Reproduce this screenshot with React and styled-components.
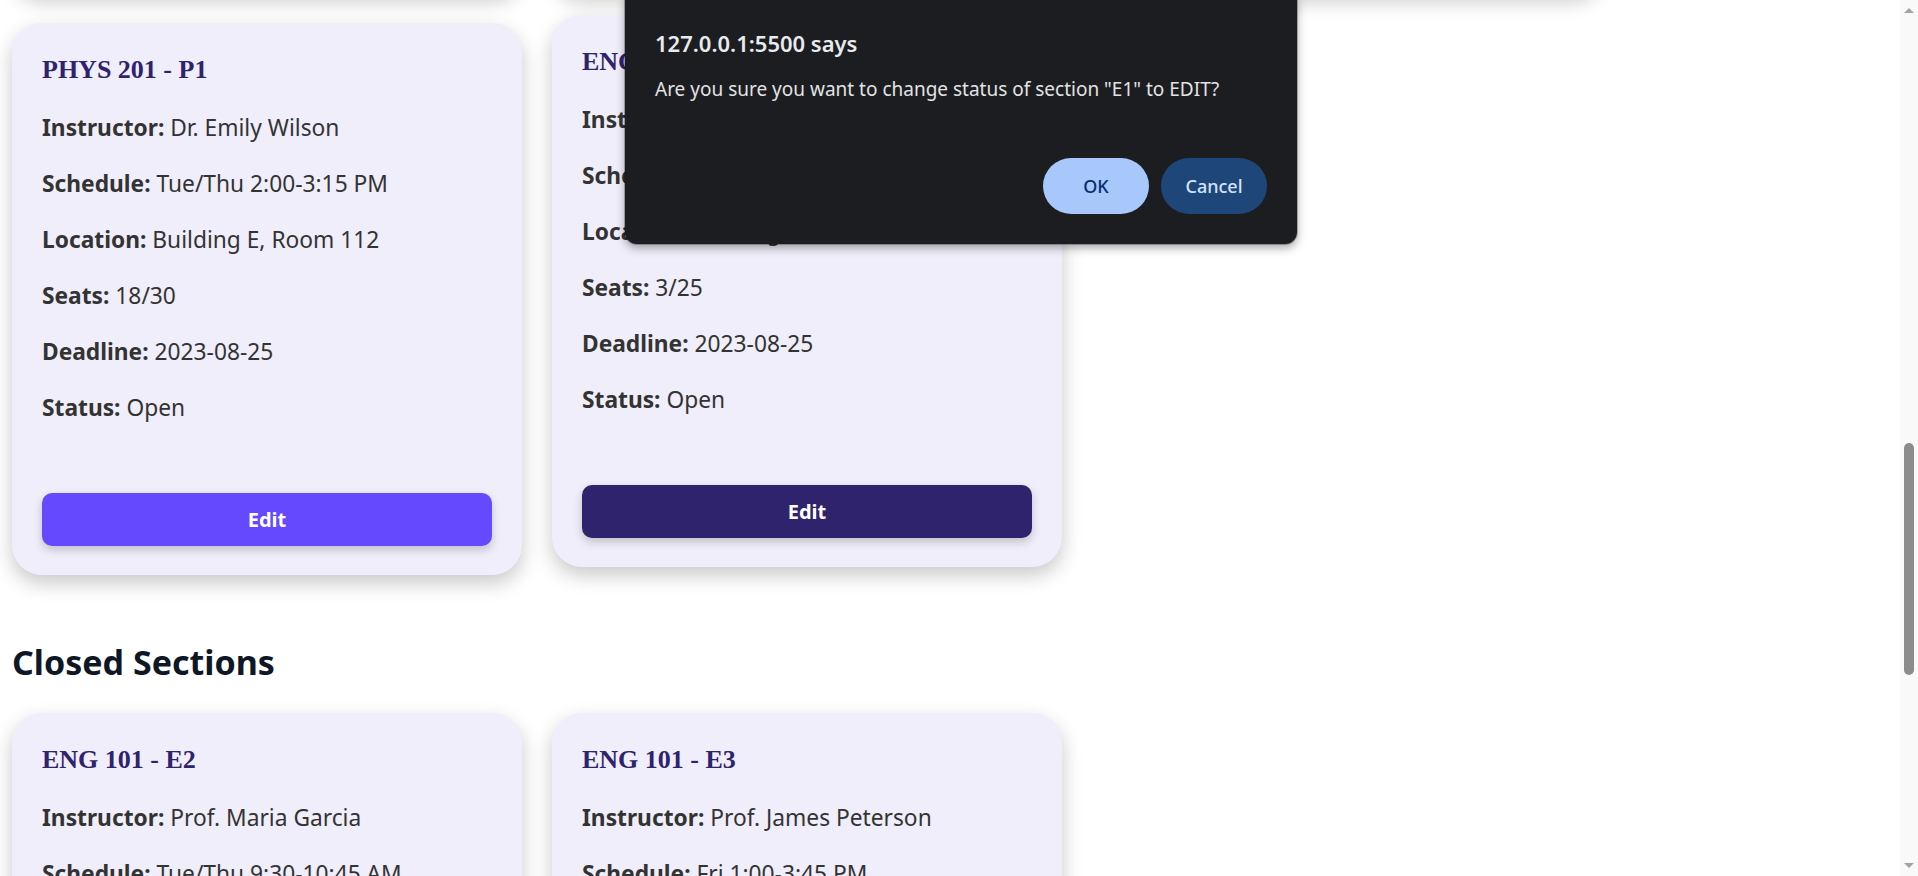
import React, { useLayoutEffect, useRef } from 'react';
import styled, { createGlobalStyle } from 'styled-components';

const GlobalStyle = createGlobalStyle`
  html, body {
    margin: 0;
    padding: 0;
    height: 100%;
    overflow: hidden;
    background: #fff;
  }

  body {
    font-family: "Noto Sans", "Segoe UI", sans-serif;
    color: #333;
  }

  * {
    box-sizing: border-box;
  }
`;

const Window = styled.div`
  position: relative;
  display: flex;
  height: 100vh;
  background: #fff;
`;

const Viewport = styled.div`
  position: relative;
  flex: 1;
  overflow: hidden;
`;

const Page = styled.main`
  padding: 0 12px 60px;
`;

const SectionTitle = styled.h2`
  margin: 66px 0 30px;
  font-size: 34px;
  line-height: 42px;
  font-weight: 700;
  color: #0e1726;

  &:first-child {
    margin-top: 24px;
  }
`;

const Grid = styled.div`
  display: grid;
  grid-template-columns: repeat(auto-fill, 510px);
  gap: 30px;
`;

const Card = styled.article`
  display: flex;
  flex-direction: column;
  padding: 32px 30px 29px;
  background: #f0eefa;
  border-radius: 30px;
  box-shadow: 0 8px 20px rgba(0, 0, 0, 0.22);
  transform: ${(p) => (p.$lifted ? 'translateY(-8px)' : 'none')};
`;

const CourseTitle = styled.h3`
  margin: 0 0 15px;
  font-family: "Liberation Serif", "Times New Roman", serif;
  font-size: 26px;
  line-height: 1.15;
  font-weight: 700;
  color: #2e236c;
`;

const Row = styled.p`
  margin: 0;
  font-size: 22.75px;
  line-height: 56px;
  color: #333;
  white-space: nowrap;

  & > strong {
    font-weight: 700;
  }
`;

const EditButton = styled.button`
  margin-top: 57px;
  width: 100%;
  height: 53px;
  border: 0;
  border-radius: 10px;
  background: ${(p) => (p.$active ? '#6449ff' : '#2e236c')};
  color: #fff;
  font-family: "Noto Sans", sans-serif;
  font-size: 20px;
  font-weight: 700;
  box-shadow: 0 4px 10px rgba(0, 0, 0, 0.2);
  cursor: pointer;
`;

const Scrollbar = styled.div`
  flex: none;
  width: 18px;
  display: flex;
  flex-direction: column;
  align-items: center;
  background: #f9f9f9;
`;

const Arrow = styled.div`
  width: 0;
  height: 0;
  margin: ${(p) => (p.$down ? '0 0 8px' : '8px 0 0')};
  border-left: 5px solid transparent;
  border-right: 5px solid transparent;
  ${(p) => (p.$down ? 'border-top' : 'border-bottom')}: 5px solid #a3a3a3;
`;

const Track = styled.div`
  flex: 1;
  width: 100%;
  display: flex;
  justify-content: center;
`;

const Thumb = styled.div`
  width: 10px;
  height: 232px;
  margin-top: 430px;
  border-radius: 5px;
  background: #8c8c8c;
`;

const Dialog = styled.div`
  position: absolute;
  top: -12px;
  left: 625px;
  width: 672px;
  padding: 40px 30px 30px;
  background: #1c1d21;
  border-radius: 12px;
  box-shadow: 0 0 0 1px rgba(0, 0, 0, 0.25), 0 4px 10px rgba(0, 0, 0, 0.35);
  color: #e3e3e3;
`;

const DialogTitle = styled.div`
  font-size: 22px;
  font-weight: 600;
  color: #e8eaed;
`;

const DialogMessage = styled.div`
  margin-top: 18px;
  font-size: 19px;
  color: #e3e3e3;
`;

const DialogActions = styled.div`
  display: flex;
  justify-content: flex-end;
  gap: 12px;
  margin-top: 56px;
`;

const DialogButton = styled.button`
  width: 106px;
  height: 56px;
  border: 0;
  border-radius: 28px;
  background: ${(p) => (p.$primary ? '#a8c7fa' : '#1f4679')};
  color: ${(p) => (p.$primary ? '#062e6f' : '#d3e3fd')};
  font-family: "Noto Sans", sans-serif;
  font-size: 18px;
  font-weight: 500;
`;

const openSections = [
  {
    id: 'M1',
    course: 'MATH 101',
    instructor: 'Dr. Alan Turner',
    schedule: 'Mon/Wed 8:00-9:15 AM',
    location: 'Building A, Room 101',
    seats: '22/30',
    deadline: '2023-08-25',
    status: 'Open',
  },
  {
    id: 'C1',
    course: 'CS 102',
    instructor: 'Dr. Linda Chen',
    schedule: 'Mon/Wed 11:00-12:15 PM',
    location: 'Building C, Room 210',
    seats: '27/35',
    deadline: '2023-08-25',
    status: 'Open',
  },
  {
    id: 'B1',
    course: 'BIO 110',
    instructor: 'Prof. Robert King',
    schedule: 'Tue/Thu 10:00-11:15 AM',
    location: 'Building D, Room 004',
    seats: '12/28',
    deadline: '2023-08-25',
    status: 'Open',
  },
  {
    id: 'P1',
    course: 'PHYS 201',
    instructor: 'Dr. Emily Wilson',
    schedule: 'Tue/Thu 2:00-3:15 PM',
    location: 'Building E, Room 112',
    seats: '18/30',
    deadline: '2023-08-25',
    status: 'Open',
    active: true,
  },
  {
    id: 'E1',
    course: 'ENG 101',
    instructor: 'Prof. Sarah Johnson',
    schedule: 'Mon/Wed 10:00-11:15 AM',
    location: 'Building B, Room 204',
    seats: '3/25',
    deadline: '2023-08-25',
    status: 'Open',
    lifted: true,
  },
];

const closedSections = [
  {
    id: 'E2',
    course: 'ENG 101',
    instructor: 'Prof. Maria Garcia',
    schedule: 'Tue/Thu 9:30-10:45 AM',
    location: 'Building B, Room 118',
    seats: '25/25',
    deadline: '2023-08-20',
    status: 'Closed',
  },
  {
    id: 'E3',
    course: 'ENG 101',
    instructor: 'Prof. James Peterson',
    schedule: 'Fri 1:00-3:45 PM',
    location: 'Building B, Room 120',
    seats: '25/25',
    deadline: '2023-08-20',
    status: 'Closed',
  },
];

function SectionCard({ section, cardRef }) {
  return (
    <Card ref={cardRef} $lifted={section.lifted}>
      <CourseTitle>
        {section.course} - {section.id}
      </CourseTitle>
      <Row>
        <strong>Instructor:</strong> {section.instructor}
      </Row>
      <Row>
        <strong>Schedule:</strong> {section.schedule}
      </Row>
      <Row>
        <strong>Location:</strong> {section.location}
      </Row>
      <Row>
        <strong>Seats:</strong> {section.seats}
      </Row>
      <Row>
        <strong>Deadline:</strong> {section.deadline}
      </Row>
      <Row>
        <strong>Status:</strong> {section.status}
      </Row>
      <EditButton $active={section.active}>Edit</EditButton>
    </Card>
  );
}

export default function App() {
  const viewportRef = useRef(null);
  const anchorRef = useRef(null);

  // keep the page scrolled so the PHYS card sits where it was
  useLayoutEffect(() => {
    const v = viewportRef.current;
    const a = anchorRef.current;
    if (v && a) v.scrollTop = a.offsetTop - 23;
  }, []);

  return (
    <Window>
      <GlobalStyle />
      <Viewport ref={viewportRef}>
        <Page>
          <SectionTitle>Open Sections</SectionTitle>
          <Grid>
            {openSections.map((s) => (
              <SectionCard
                key={s.id}
                section={s}
                cardRef={s.id === 'P1' ? anchorRef : undefined}
              />
            ))}
          </Grid>
          <SectionTitle>Closed Sections</SectionTitle>
          <Grid>
            {closedSections.map((s) => (
              <SectionCard key={s.id} section={s} />
            ))}
          </Grid>
        </Page>
      </Viewport>
      <Scrollbar>
        <Arrow />
        <Track>
          <Thumb />
        </Track>
        <Arrow $down />
      </Scrollbar>
      <Dialog role="alertdialog">
        <DialogTitle>127.0.0.1:5500 says</DialogTitle>
        <DialogMessage>
          Are you sure you want to change status of section "E1" to EDIT?
        </DialogMessage>
        <DialogActions>
          <DialogButton $primary>OK</DialogButton>
          <DialogButton>Cancel</DialogButton>
        </DialogActions>
      </Dialog>
    </Window>
  );
}
